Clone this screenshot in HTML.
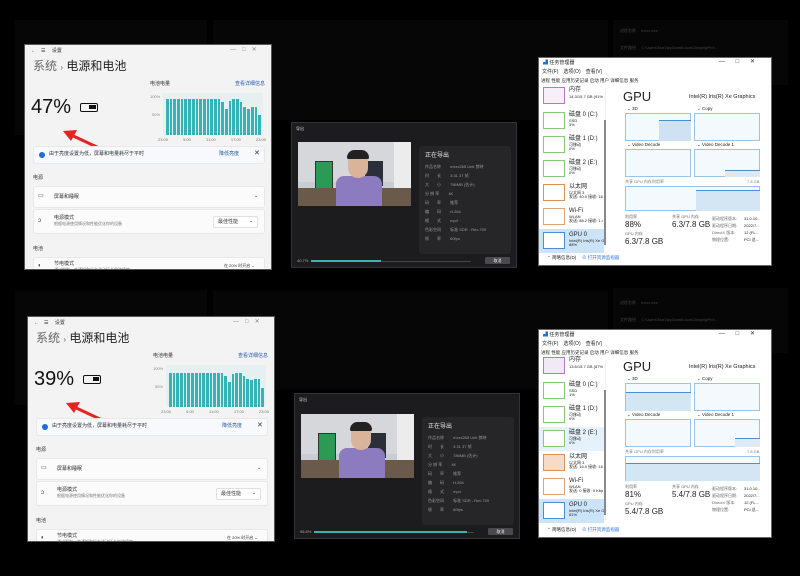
<!DOCTYPE html>
<html><head><meta charset="utf-8">
<style>
*{margin:0;padding:0;box-sizing:border-box}
body{width:800px;height:576px;background:#000;position:relative;overflow:hidden;font-family:"Liberation Sans","Noto Sans CJK SC",sans-serif;line-height:1.05}
.a{position:absolute}
.bg{background:#060606}
.set{position:absolute;width:248px;height:226px;background:#f3f3f3;overflow:hidden;border:1px solid #555}
.set .t{font-size:5px;color:#333}
.card{position:absolute;left:8px;width:232px;background:#fbfbfb;border:1px solid #e8e8e8;border-radius:3px}
.bars{position:absolute;display:flex;align-items:flex-end;gap:1px}
.bars i{display:block;width:2.7px;background:#36b3b5}
.tm{position:absolute;width:234px;height:209px;background:#fff;overflow:hidden;border:1px solid #666;font-size:5px;color:#222}
.li{position:absolute;left:0;width:64px;height:24px;overflow:hidden}
.th{position:absolute;left:4px;top:3px;width:22px;height:17px;border:1px solid}
.gr{position:absolute;border:1px solid #9cc3e6;background:#f4f9fd}
.exp{position:absolute;width:226px;height:146px;background:#1c1c1e;border:1px solid #333;color:#ccc;font-size:4px}
.vid{position:absolute;left:6px;top:19px;width:113px;height:64px;background:#c9ccd0;overflow:hidden}
.info{position:absolute;left:127px;top:23px;width:92px;height:108px;background:#262628;border-radius:3px}
.row{position:absolute;left:6px;font-size:4px;color:#999;white-space:nowrap}
</style></head><body>

<div class="a bg" style="left:15px;top:20px;width:192px;height:115px"></div>
<div class="a bg" style="left:213px;top:20px;width:395px;height:100px"></div>
<div class="a bg" style="left:613px;top:20px;width:175px;height:65px"></div>
<div class="a bg" style="left:15px;top:290px;width:192px;height:115px"></div>
<div class="a bg" style="left:213px;top:290px;width:395px;height:100px"></div>
<div class="a bg" style="left:613px;top:288px;width:175px;height:65px"></div>
<div class="a" style="left:620px;top:22px;font-size:4px;color:#444;line-height:17px">进程名称　 mxxx.exe<br>文件路径　 C:\Users\Nur\AppData\Local\JianyingPro\...<br>CPU　 高<br>内存占用　 4.4 GB</div>
<div class="a" style="left:620px;top:294px;font-size:4px;color:#444;line-height:17px">进程名称　 mxxx.exe<br>文件路径　 C:\Users\Nur\AppData\Local\JianyingPro\...<br>CPU　 高<br>内存占用　 4.4 GB</div>

<!-- Settings top -->
<div class="set" style="left:24px;top:44px">
 <div class="a t" style="left:6px;top:4px">←　☰　 设置</div>
 <div class="a t" style="left:205px;top:2px;font-size:6px;color:#888">—　□　✕</div>
 <div class="a" style="left:8px;top:15px;font-size:12px;color:#222"><span style="color:#666">系统</span> <span style="font-size:8px;color:#666">›</span> 电源和电池</div>
 <div class="a" style="left:6px;top:52px;font-size:20px;color:#111">47%</div>
 <div class="a" style="left:55px;top:58px;width:18px;height:9px;border:1.5px solid #111;border-radius:2px"><div style="position:absolute;right:1px;top:1px;width:7px;height:4px;background:#111"></div></div>
 <div class="a t" style="left:125px;top:37px">电池电量</div>
 <div class="a t" style="left:210px;top:37px;color:#2a5bb0">查看详细信息</div>
 <div class="a t" style="left:125px;top:50px;font-size:4px;color:#888">100%</div>
 <div class="a t" style="left:127px;top:68px;font-size:4px;color:#888">50%</div>
 <div class="a" style="left:138px;top:48px;width:100px;height:42px;background:#e7f0f0"></div>
 <div class="bars" style="left:141px;top:54px;height:36px">
  <i style="height:36px"></i><i style="height:36px"></i><i style="height:36px"></i><i style="height:36px"></i><i style="height:36px"></i><i style="height:36px"></i><i style="height:36px"></i><i style="height:36px"></i><i style="height:36px"></i><i style="height:36px"></i><i style="height:36px"></i><i style="height:36px"></i><i style="height:36px"></i><i style="height:36px"></i><i style="height:36px"></i><i style="height:33px"></i><i style="height:26px"></i><i style="height:34px"></i><i style="height:36px"></i><i style="height:36px"></i><i style="height:33px"></i><i style="height:28px"></i><i style="height:26px"></i><i style="height:28px"></i><i style="height:28px"></i><i style="height:20px"></i>
 </div>
 <div class="a t" style="left:133px;top:93px;font-size:4px;color:#777;word-spacing:14px">23:00 5:00 11:00 17:00 23:00</div>
 <svg class="a" style="left:36px;top:84px" width="42" height="22"><line x1="38" y1="19" x2="8" y2="5" stroke="#e52420" stroke-width="3"/><polygon points="2,2 16,1 10,12" fill="#e52420"/></svg>
 <div class="card" style="top:101px;height:18px;background:#f7f9fc">
  <div class="a" style="left:5px;top:5px;width:6px;height:6px;border-radius:50%;background:#1f6fd1"></div>
  <div class="a t" style="left:15px;top:5px">由于亮度设置为低，屏幕和电量耗尽于平时</div>
  <div class="a t" style="left:185px;top:5px;color:#2a5bb0">降低亮度</div>
  <div class="a t" style="left:220px;top:3px;font-size:7px">✕</div>
 </div>
 <div class="a t" style="left:8px;top:131px">电源</div>
 <div class="card" style="top:141px;height:22px"><div class="a t" style="left:4px;top:6px;font-size:6px">▭</div><div class="a t" style="left:20px;top:8px">屏幕和睡眠</div><div class="a t" style="left:220px;top:7px">⌄</div></div>
 <div class="card" style="top:164px;height:25px"><div class="a t" style="left:4px;top:8px;font-size:6px">ↄ</div><div class="a t" style="left:20px;top:6px">电源模式</div><div class="a t" style="left:20px;top:12px;font-size:4px;color:#777">根据电源使用情况和性能优化你的设备</div><div class="a" style="left:179px;top:6px;width:45px;height:12px;background:#fff;border:1px solid #e0e0e0;border-radius:2px"><div class="a t" style="left:4px;top:3px">最佳性能</div><div class="a t" style="left:35px;top:2px">⌄</div></div></div>
 <div class="a t" style="left:8px;top:202px">电池</div>
 <div class="card" style="top:212px;height:20px"><div class="a t" style="left:4px;top:5px;font-size:6px">◐</div><div class="a t" style="left:20px;top:4px">节电模式</div><div class="a t" style="left:20px;top:10px;font-size:4px;color:#777">通过限制一些通知和后台活动延长电池续航</div><div class="a t" style="left:190px;top:6px;font-size:4px">在 20% 时开启 ⌄</div></div>
</div>

<!-- Settings bottom -->
<div class="set" style="left:27px;top:316px">
 <div class="a t" style="left:6px;top:4px">←　☰　 设置</div>
 <div class="a t" style="left:205px;top:2px;font-size:6px;color:#888">—　□　✕</div>
 <div class="a" style="left:8px;top:15px;font-size:12px;color:#222"><span style="color:#666">系统</span> <span style="font-size:8px;color:#666">›</span> 电源和电池</div>
 <div class="a" style="left:6px;top:52px;font-size:20px;color:#111">39%</div>
 <div class="a" style="left:55px;top:58px;width:18px;height:9px;border:1.5px solid #111;border-radius:2px"><div style="position:absolute;right:1px;top:1px;width:6px;height:4px;background:#111"></div></div>
 <div class="a t" style="left:125px;top:37px">电池电量</div>
 <div class="a t" style="left:210px;top:37px;color:#2a5bb0">查看详细信息</div>
 <div class="a t" style="left:125px;top:50px;font-size:4px;color:#888">100%</div>
 <div class="a t" style="left:127px;top:68px;font-size:4px;color:#888">50%</div>
 <div class="a" style="left:138px;top:48px;width:100px;height:42px;background:#e7f0f0"></div>
 <div class="bars" style="left:141px;top:54px;height:36px">
  <i style="height:34px"></i><i style="height:34px"></i><i style="height:34px"></i><i style="height:34px"></i><i style="height:34px"></i><i style="height:34px"></i><i style="height:34px"></i><i style="height:34px"></i><i style="height:34px"></i><i style="height:34px"></i><i style="height:34px"></i><i style="height:34px"></i><i style="height:34px"></i><i style="height:34px"></i><i style="height:34px"></i><i style="height:31px"></i><i style="height:25px"></i><i style="height:33px"></i><i style="height:34px"></i><i style="height:34px"></i><i style="height:31px"></i><i style="height:28px"></i><i style="height:27px"></i><i style="height:28px"></i><i style="height:28px"></i><i style="height:19px"></i>
 </div>
 <div class="a t" style="left:133px;top:93px;font-size:4px;color:#777;word-spacing:14px">23:00 5:00 11:00 17:00 23:00</div>
 <svg class="a" style="left:36px;top:84px" width="42" height="22"><line x1="38" y1="19" x2="8" y2="5" stroke="#e52420" stroke-width="3"/><polygon points="2,2 16,1 10,12" fill="#e52420"/></svg>
 <div class="card" style="top:101px;height:18px;background:#f7f9fc">
  <div class="a" style="left:5px;top:5px;width:6px;height:6px;border-radius:50%;background:#1f6fd1"></div>
  <div class="a t" style="left:15px;top:5px">由于亮度设置为低，屏幕和电量耗尽于平时</div>
  <div class="a t" style="left:185px;top:5px;color:#2a5bb0">降低亮度</div>
  <div class="a t" style="left:220px;top:3px;font-size:7px">✕</div>
 </div>
 <div class="a t" style="left:8px;top:131px">电源</div>
 <div class="card" style="top:141px;height:22px"><div class="a t" style="left:4px;top:6px;font-size:6px">▭</div><div class="a t" style="left:20px;top:8px">屏幕和睡眠</div><div class="a t" style="left:220px;top:7px">⌄</div></div>
 <div class="card" style="top:164px;height:25px"><div class="a t" style="left:4px;top:8px;font-size:6px">ↄ</div><div class="a t" style="left:20px;top:6px">电源模式</div><div class="a t" style="left:20px;top:12px;font-size:4px;color:#777">根据电源使用情况和性能优化你的设备</div><div class="a" style="left:179px;top:6px;width:45px;height:12px;background:#fff;border:1px solid #e0e0e0;border-radius:2px"><div class="a t" style="left:4px;top:3px">最佳性能</div><div class="a t" style="left:35px;top:2px">⌄</div></div></div>
 <div class="a t" style="left:8px;top:202px">电池</div>
 <div class="card" style="top:212px;height:20px"><div class="a t" style="left:4px;top:5px;font-size:6px">◐</div><div class="a t" style="left:20px;top:4px">节电模式</div><div class="a t" style="left:20px;top:10px;font-size:4px;color:#777">通过限制一些通知和后台活动延长电池续航</div><div class="a t" style="left:190px;top:6px;font-size:4px">在 20% 时开启 ⌄</div></div>
</div>

<!-- Export top -->
<div class="exp" style="left:291px;top:122px">
 <div class="a" style="left:4px;top:4px;font-size:4px;color:#ddd">导出</div>
 <div class="vid">
  <div class="a" style="left:0;top:0;width:113px;height:40px;background:#d6d7da"></div>
  <div class="a" style="left:96px;top:0;width:17px;height:64px;background:#ececec"></div>
  <div class="a" style="left:17px;top:19px;width:18px;height:33px;background:#2b9a55;border:1px solid #333"></div>
  <div class="a" style="left:67px;top:19px;width:18px;height:25px;background:#2a2f3a"></div>
  <div class="a" style="left:0;top:46px;width:113px;height:18px;background:#6a5a4c"></div>
  <div class="a" style="left:38px;top:34px;width:46px;height:30px;background:#8c7bbf;border-radius:8px 8px 0 0"></div>
  <div class="a" style="left:50px;top:10px;width:20px;height:26px;background:#d9b39a;border-radius:9px 9px 10px 10px"></div>
  <div class="a" style="left:49px;top:8px;width:22px;height:9px;background:#222;border-radius:10px 10px 2px 2px"></div>
 </div>
 <div class="info">
  <div class="a" style="left:6px;top:7px;font-size:6px;color:#eee">正在导出</div>
  <div class="row" style="top:19px">作品名称　　 mxxx265 Unit 剪映</div>
  <div class="row" style="top:28px">时　　长　　 3:31 37 帧</div>
  <div class="row" style="top:37px">大　　小　　 786MB (估计)</div>
  <div class="row" style="top:46px">分 辨 率　　 4K</div>
  <div class="row" style="top:55px">码　　率　　 推荐</div>
  <div class="row" style="top:64px">编　　码　　 H.264</div>
  <div class="row" style="top:73px">格　　式　　 mp4</div>
  <div class="row" style="top:82px">色彩空间　　 标准 SDR - Rec.709</div>
  <div class="row" style="top:91px">帧　　率　　 60fps</div>
 </div>
 <div class="a" style="left:5px;top:136px;font-size:4px;color:#aaa">40.7%</div>
 <div class="a" style="left:19px;top:138px;width:160px;height:1px;background:#444"></div>
 <div class="a" style="left:19px;top:137px;width:70px;height:2px;background:#3ab3b0"></div>
 <div class="a" style="left:193px;top:134px;width:25px;height:7px;background:#4a4a4e;border-radius:1px;font-size:4px;color:#eee;text-align:center;line-height:7px">取消</div>
</div>

<!-- Export bottom -->
<div class="exp" style="left:294px;top:393px">
 <div class="a" style="left:4px;top:4px;font-size:4px;color:#ddd">导出</div>
 <div class="vid" style="left:6px;top:20px">
  <div class="a" style="left:0;top:0;width:113px;height:40px;background:#d6d7da"></div>
  <div class="a" style="left:96px;top:0;width:17px;height:64px;background:#ececec"></div>
  <div class="a" style="left:17px;top:19px;width:18px;height:33px;background:#2b9a55;border:1px solid #333"></div>
  <div class="a" style="left:67px;top:19px;width:18px;height:25px;background:#2a2f3a"></div>
  <div class="a" style="left:0;top:46px;width:113px;height:18px;background:#6a5a4c"></div>
  <div class="a" style="left:38px;top:34px;width:46px;height:30px;background:#8c7bbf;border-radius:8px 8px 0 0"></div>
  <div class="a" style="left:50px;top:10px;width:20px;height:26px;background:#d9b39a;border-radius:9px 9px 10px 10px"></div>
  <div class="a" style="left:49px;top:8px;width:22px;height:9px;background:#222;border-radius:10px 10px 2px 2px"></div>
 </div>
 <div class="info">
  <div class="a" style="left:6px;top:7px;font-size:6px;color:#eee">正在导出</div>
  <div class="row" style="top:19px">作品名称　　 mxxx265 Unit 剪映</div>
  <div class="row" style="top:28px">时　　长　　 3:31 37 帧</div>
  <div class="row" style="top:37px">大　　小　　 786MB (估计)</div>
  <div class="row" style="top:46px">分 辨 率　　 4K</div>
  <div class="row" style="top:55px">码　　率　　 推荐</div>
  <div class="row" style="top:64px">编　　码　　 H.264</div>
  <div class="row" style="top:73px">格　　式　　 mp4</div>
  <div class="row" style="top:82px">色彩空间　　 标准 SDR - Rec.709</div>
  <div class="row" style="top:91px">帧　　率　　 60fps</div>
 </div>
 <div class="a" style="left:5px;top:136px;font-size:4px;color:#aaa">96.6%</div>
 <div class="a" style="left:19px;top:138px;width:160px;height:1px;background:#444"></div>
 <div class="a" style="left:19px;top:137px;width:153px;height:2px;background:#3ab3b0"></div>
 <div class="a" style="left:193px;top:134px;width:25px;height:7px;background:#4a4a4e;border-radius:1px;font-size:4px;color:#eee;text-align:center;line-height:7px">取消</div>
</div>

<!-- Task manager top -->
<div class="tm" style="left:538px;top:57px">
 <div class="a" style="left:4px;top:3px"><span style="color:#1e73d8">▟</span> 任务管理器</div>
 <div class="a" style="left:180px;top:1px;font-size:6px;color:#333;word-spacing:9px">— □ ✕</div>
 <div class="a" style="left:3px;top:12px">文件(F)　选项(O)　查看(V)</div>
 <div class="a" style="left:2px;top:21px;font-size:4.5px">进程 性能 应用历史记录 启动 用户 详细信息 服务</div>
 <div class="a" style="left:66px;top:30px;width:1px;height:160px;background:#eee"></div>
 <div class="a" style="left:65px;top:62px;width:2px;height:125px;background:#888"></div>
 <div class="li" style="top:27px"><div class="th" style="border-color:#b27bc4;top:2px;background:#f7f0fa"></div><div class="a" style="left:30px;top:2px;font-size:6px">内存</div><div class="a" style="left:30px;top:10px;font-size:4px;white-space:nowrap">14.3/15.7 GB (91%)</div></div>
 <div class="li" style="top:51px"><div class="th" style="border-color:#8cc47a"></div><div class="a" style="left:30px;top:3px;font-size:6px;white-space:nowrap">磁盘 0 (C:)</div><div class="a" style="left:30px;top:10px;font-size:4px">SSD<br>3%</div></div>
 <div class="li" style="top:75px"><div class="th" style="border-color:#8cc47a"></div><div class="a" style="left:30px;top:3px;font-size:6px;white-space:nowrap">磁盘 1 (D:)</div><div class="a" style="left:30px;top:10px;font-size:4px">可移动<br>0%</div></div>
 <div class="li" style="top:99px"><div class="th" style="border-color:#8cc47a"></div><div class="a" style="left:30px;top:3px;font-size:6px;white-space:nowrap">磁盘 2 (E:)</div><div class="a" style="left:30px;top:10px;font-size:4px">可移动<br>0%</div></div>
 <div class="li" style="top:123px"><div class="th" style="border-color:#d9925a"></div><div class="a" style="left:30px;top:3px;font-size:6px">以太网</div><div class="a" style="left:30px;top:10px;font-size:4px;white-space:nowrap">以太网 3<br>发送: 40.0 接收: 16</div></div>
 <div class="li" style="top:147px"><div class="th" style="border-color:#d9a67a"></div><div class="a" style="left:30px;top:3px;font-size:6px">Wi-Fi</div><div class="a" style="left:30px;top:10px;font-size:4px;white-space:nowrap">WLAN<br>发送: 88.2 接收: 1.4</div></div>
 <div class="li" style="top:171px;background:#cce4f7;width:65px"><div class="th" style="border-color:#4a8fd0;background:#fff"></div><div class="a" style="left:30px;top:3px;font-size:6px">GPU 0</div><div class="a" style="left:30px;top:10px;font-size:4px;white-space:nowrap">Intel(R) Iris(R) Xe G<br>88%</div></div>
 <div class="a" style="left:8px;top:198px;font-size:4.5px">⌃ 简略信息(D)　 <span style="color:#1e73d8">⊘ 打开资源监视器</span></div>
 <div class="a" style="left:84px;top:32px;font-size:13px">GPU</div>
 <div class="a" style="left:150px;top:37px;font-size:5.5px">Intel(R) Iris(R) Xe Graphics</div>
 <div class="a" style="left:88px;top:49px;font-size:4.5px">⌄ 3D</div><div class="a" style="left:158px;top:49px;font-size:4.5px">⌄ Copy</div>
 <div class="gr" style="left:86px;top:55px;width:66px;height:28px"><div class="a" style="left:33px;top:6px;width:32px;height:21px;background:#cfe2f3;border-top:1px solid #4a8fd0"></div></div>
 <div class="gr" style="left:155px;top:55px;width:66px;height:28px"></div>
 <div class="a" style="left:88px;top:85px;font-size:4.5px">⌄ Video Decode</div><div class="a" style="left:158px;top:85px;font-size:4.5px">⌄ Video Decode 1</div>
 <div class="gr" style="left:86px;top:91px;width:66px;height:28px"></div>
 <div class="gr" style="left:155px;top:91px;width:66px;height:28px"><div class="a" style="left:30px;top:20px;width:35px;height:7px;background:#dde9f5;border-top:1px solid #4a8fd0"></div></div>
 <div class="a" style="left:86px;top:122px;font-size:4px;color:#777">共享 GPU 内存利用率</div><div class="a" style="left:208px;top:122px;font-size:4px;color:#777">7.8 GB</div>
 <div class="gr" style="left:86px;top:128px;width:135px;height:25px"><div class="a" style="left:70px;top:3px;width:64px;height:21px;background:#d4e5f4;border-top:1px solid #4a8fd0"></div></div>
 <div class="a" style="left:86px;top:157px;font-size:4px;color:#666">利用率</div>
 <div class="a" style="left:86px;top:163px;font-size:8px">88%</div>
 <div class="a" style="left:86px;top:174px;font-size:4px;color:#666">GPU 内存</div>
 <div class="a" style="left:86px;top:180px;font-size:8px">6.3/7.8 GB</div>
 <div class="a" style="left:133px;top:157px;font-size:4px;color:#666">共享 GPU 内存</div>
 <div class="a" style="left:133px;top:163px;font-size:8px">6.3/7.8 GB</div>
 <div class="a" style="left:173px;top:157px;font-size:4px;color:#666;line-height:7px">驱动程序版本:<br>驱动程序日期:<br>DirectX 版本:<br>物理位置:</div>
 <div class="a" style="left:205px;top:157px;font-size:4px;line-height:7px">31.0.10..<br>2022/7...<br>12 (FL...<br>PCI 总...</div>
</div>

<!-- Task manager bottom -->
<div class="tm" style="left:538px;top:329px">
 <div class="a" style="left:4px;top:3px"><span style="color:#1e73d8">▟</span> 任务管理器</div>
 <div class="a" style="left:180px;top:1px;font-size:6px;color:#333;word-spacing:9px">— □ ✕</div>
 <div class="a" style="left:3px;top:12px">文件(F)　选项(O)　查看(V)</div>
 <div class="a" style="left:2px;top:21px;font-size:4.5px">进程 性能 应用历史记录 启动 用户 详细信息 服务</div>
 <div class="a" style="left:66px;top:30px;width:1px;height:160px;background:#eee"></div>
 <div class="a" style="left:65px;top:60px;width:2px;height:125px;background:#888"></div>
 <div class="li" style="top:25px"><div class="th" style="border-color:#b27bc4;top:2px;background:#f2e9f6"></div><div class="a" style="left:30px;top:2px;font-size:6px">内存</div><div class="a" style="left:30px;top:10px;font-size:4px;white-space:nowrap">13.6/15.7 GB (87%)</div></div>
 <div class="li" style="top:49px"><div class="th" style="border-color:#8cc47a"></div><div class="a" style="left:30px;top:3px;font-size:6px;white-space:nowrap">磁盘 0 (C:)</div><div class="a" style="left:30px;top:10px;font-size:4px">SSD<br>1%</div></div>
 <div class="li" style="top:73px"><div class="th" style="border-color:#8cc47a"></div><div class="a" style="left:30px;top:3px;font-size:6px;white-space:nowrap">磁盘 1 (D:)</div><div class="a" style="left:30px;top:10px;font-size:4px">可移动<br>0%</div></div>
 <div class="li" style="top:97px;background:#e5f1fb;width:65px"><div class="th" style="border-color:#8cc47a;background:#fff"></div><div class="a" style="left:30px;top:3px;font-size:6px;white-space:nowrap">磁盘 2 (E:)</div><div class="a" style="left:30px;top:10px;font-size:4px">可移动<br>0%</div></div>
 <div class="li" style="top:121px"><div class="th" style="border-color:#d9925a;background:#f6dcc6"></div><div class="a" style="left:30px;top:3px;font-size:6px">以太网</div><div class="a" style="left:30px;top:10px;font-size:4px;white-space:nowrap">以太网 3<br>发送: 16.0 接收: 16</div></div>
 <div class="li" style="top:145px"><div class="th" style="border-color:#d9a67a"></div><div class="a" style="left:30px;top:3px;font-size:6px">Wi-Fi</div><div class="a" style="left:30px;top:10px;font-size:4px;white-space:nowrap">WLAN<br>发送: 0 接收: 0 Kbp</div></div>
 <div class="li" style="top:169px;background:#cce4f7;width:65px"><div class="th" style="border-color:#4a8fd0;background:#fff"></div><div class="a" style="left:30px;top:3px;font-size:6px">GPU 0</div><div class="a" style="left:30px;top:10px;font-size:4px;white-space:nowrap">Intel(R) Iris(R) Xe G<br>81%</div></div>
 <div class="a" style="left:8px;top:198px;font-size:4.5px">⌃ 简略信息(D)　 <span style="color:#1e73d8">⊘ 打开资源监视器</span></div>
 <div class="a" style="left:84px;top:30px;font-size:13px">GPU</div>
 <div class="a" style="left:150px;top:35px;font-size:5.5px">Intel(R) Iris(R) Xe Graphics</div>
 <div class="a" style="left:88px;top:47px;font-size:4.5px">⌄ 3D</div><div class="a" style="left:158px;top:47px;font-size:4.5px">⌄ Copy</div>
 <div class="gr" style="left:86px;top:53px;width:66px;height:28px"><div class="a" style="left:0;top:8px;width:65px;height:19px;background:#d4e5f4;border-top:1px solid #4a8fd0"></div></div>
 <div class="gr" style="left:155px;top:53px;width:66px;height:28px"></div>
 <div class="a" style="left:88px;top:83px;font-size:4.5px">⌄ Video Decode</div><div class="a" style="left:158px;top:83px;font-size:4.5px">⌄ Video Decode 1</div>
 <div class="gr" style="left:86px;top:89px;width:66px;height:28px"></div>
 <div class="gr" style="left:155px;top:89px;width:66px;height:28px"><div class="a" style="left:40px;top:18px;width:25px;height:9px;background:#dde9f5;border-top:1px solid #4a8fd0"></div></div>
 <div class="a" style="left:86px;top:120px;font-size:4px;color:#777">共享 GPU 内存利用率</div><div class="a" style="left:208px;top:120px;font-size:4px;color:#777">7.8 GB</div>
 <div class="gr" style="left:86px;top:126px;width:135px;height:25px"><div class="a" style="left:0;top:6px;width:134px;height:18px;background:#d4e5f4;border-top:1px solid #4a8fd0"></div></div>
 <div class="a" style="left:86px;top:155px;font-size:4px;color:#666">利用率</div>
 <div class="a" style="left:86px;top:161px;font-size:8px">81%</div>
 <div class="a" style="left:86px;top:172px;font-size:4px;color:#666">GPU 内存</div>
 <div class="a" style="left:86px;top:178px;font-size:8px">5.4/7.8 GB</div>
 <div class="a" style="left:133px;top:155px;font-size:4px;color:#666">共享 GPU 内存</div>
 <div class="a" style="left:133px;top:161px;font-size:8px">5.4/7.8 GB</div>
 <div class="a" style="left:173px;top:155px;font-size:4px;color:#666;line-height:7px">驱动程序版本:<br>驱动程序日期:<br>DirectX 版本:<br>物理位置:</div>
 <div class="a" style="left:205px;top:155px;font-size:4px;line-height:7px">31.0.10..<br>2022/7...<br>12 (FL...<br>PCI 总...</div>
</div>
</body></html>
